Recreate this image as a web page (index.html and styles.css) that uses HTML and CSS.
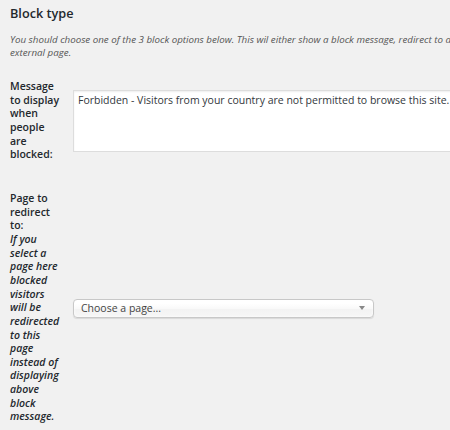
FILE: index.html
```html
<!DOCTYPE html>
<html lang="en">
<head>
<meta charset="utf-8">
<title>Block type</title>
<link rel="stylesheet" href="styles.css">
</head>
<body>
<div class="wrap">
  <h3 class="section-title">Block type</h3>
  <p class="description">You should choose one of the 3 block options below. This wil either show a block message, redirect to a external page.</p>
  <table class="form-table">
    <tr class="row row-message">
      <th class="label">Message to display when people are blocked:</th>
      <td class="field">
        <textarea class="message-input">Forbidden - Visitors from your country are not permitted to browse this site.</textarea>
      </td>
    </tr>
    <tr class="row row-redirect">
      <th class="label">Page to redirect to:<br><em class="label-note">If you select a page here blocked visitors will be redirected to this page instead of displaying above block message.</em></th>
      <td class="field">
        <div class="chosen-select">
          <span class="chosen-text">Choose a page...</span>
          <span class="chosen-arrow"></span>
        </div>
      </td>
    </tr>
  </table>
</div>
</body>
</html>
```

FILE: styles.css
```css
html, body {
  margin: 0;
  padding: 0;
  overflow: hidden;
  background: #f1f1f1;
}

body {
  font-family: "Open Sans", "Liberation Sans", sans-serif;
  color: #23282d;
  width: 450px;
  height: 430px;
}

.wrap {
  width: 520px;
  padding-left: 10px;
}

.section-title {
  margin: 0;
  padding-top: 5px;
  font-size: 12.7px;
  line-height: 17px;
  font-weight: 600;
  color: #23282d;
}

.description {
  margin: 11px 0 0;
  width: 445px;
  font-size: 9.75px;
  line-height: 13px;
  font-style: italic;
  color: #555;
}

.form-table {
  border-collapse: collapse;
  border-spacing: 0;
  margin-top: 6px;
}

.label {
  width: 50px;
  padding: 15px 13px 15px 0;
  vertical-align: top;
  text-align: left;
  font-size: 10.5px;
  line-height: 13.65px;
  font-weight: 600;
  color: #23282d;
}

.label-note {
  font-style: italic;
}

.field {
  padding: 0;
  vertical-align: middle;
}

.message-input {
  display: block;
  box-sizing: border-box;
  width: 400px;
  height: 62px;
  margin: 0;
  padding: 2px 4px;
  border: 1px solid #ddd;
  background: #fff;
  box-shadow: inset 0 1px 2px rgba(0, 0, 0, 0.07);
  font-family: "Open Sans", "Liberation Sans", sans-serif;
  font-size: 10.5px;
  line-height: 14px;
  color: #32373c;
  resize: none;
  overflow: hidden;
  outline: none;
}

.chosen-select {
  box-sizing: border-box;
  width: 301px;
  height: 19px;
  display: flex;
  align-items: center;
  justify-content: space-between;
  padding: 0 8px 0 7px;
  border: 1px solid #c8c8c8;
  border-radius: 4px;
  background: linear-gradient(#fff 20%, #f9f9f9 50%, #f3f3f3 52%, #f6f6f6 100%);
  box-shadow: inset 0 0 3px #fff, 0 1px 1px rgba(0, 0, 0, 0.1);
  font-size: 10.5px;
  color: #444;
}

.chosen-text {
  line-height: 17px;
}

.chosen-arrow {
  width: 0;
  height: 0;
  border-left: 3px solid transparent;
  border-right: 3px solid transparent;
  border-top: 4px solid #888;
  margin-top: -1px;
}
```
